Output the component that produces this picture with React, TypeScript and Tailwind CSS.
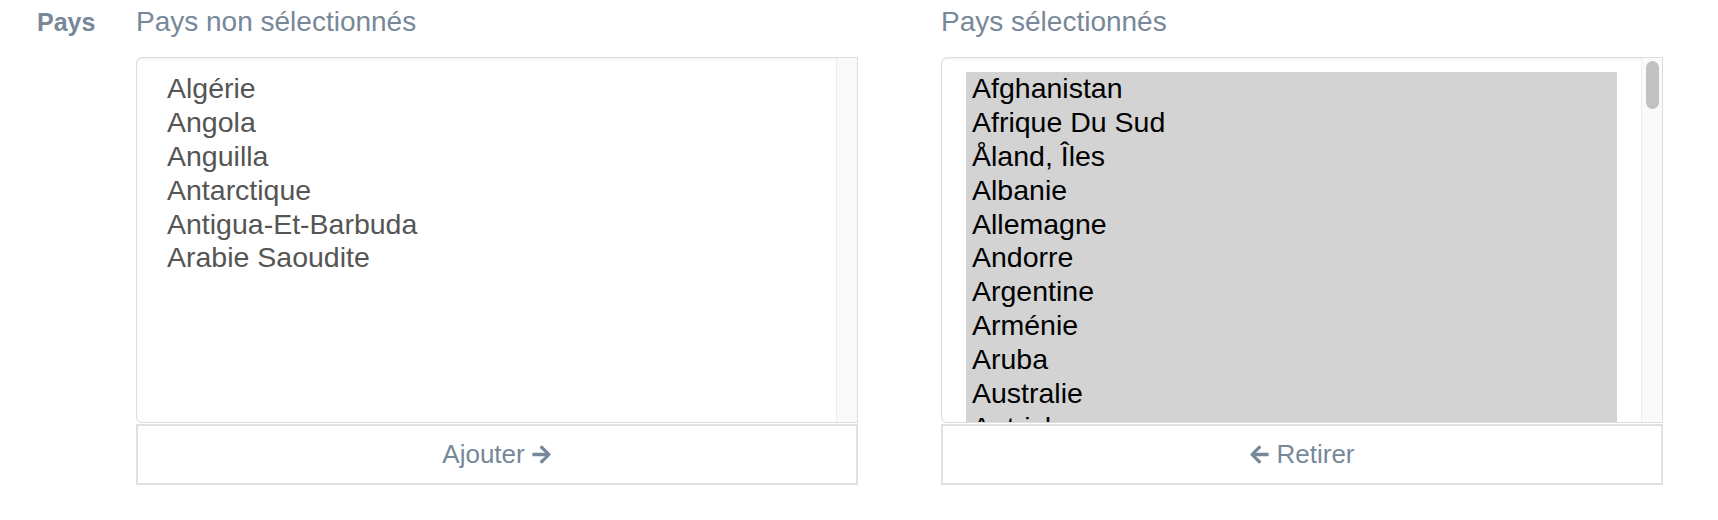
import { FaArrowLeft, FaArrowRight } from "react-icons/fa";

const UNSELECTED = [
  "Algérie",
  "Angola",
  "Anguilla",
  "Antarctique",
  "Antigua-Et-Barbuda",
  "Arabie Saoudite",
];

const SELECTED = [
  "Afghanistan",
  "Afrique Du Sud",
  "Åland, Îles",
  "Albanie",
  "Allemagne",
  "Andorre",
  "Argentine",
  "Arménie",
  "Aruba",
  "Australie",
  "Autriche",
  "Azerbaïdjan",
];

function Panel({
  title,
  items,
  selected,
  action,
}: {
  title: string;
  items: string[];
  selected: boolean;
  action: "add" | "remove";
}) {
  return (
    <div className="flex flex-col">
      <div className="mt-[5px] h-[34px] text-[28px] leading-[34px] text-[#778899]">
        {title}
      </div>

      {/* Multi-select list */}
      <div className="mt-[18px] h-[366px] flex border border-[#dddddd] rounded-l-[6px] overflow-hidden shadow-[inset_0_1px_2px_rgba(0,0,0,0.08)]">
        <div className="flex-1 overflow-hidden pt-[14px] px-[24px]">
          {items.map((item) => (
            <div
              key={item}
              className={`h-[33.9px] leading-[33.9px] pl-[6px] text-[28.5px] whitespace-nowrap ${
                selected ? "bg-[#d3d3d3] text-black" : "text-[#555555]"
              }`}
            >
              {item}
            </div>
          ))}
        </div>
        <div className="w-[21px] shrink-0 border-l border-[#ececec] bg-[#fafafa] pt-[3px] pl-[4px] pr-[3px]">
          {selected && <div className="h-[48px] rounded-full bg-[#c1c1c1]" />}
        </div>
      </div>

      <button className="mt-px h-[61px] border-2 border-[#e0e0e0] bg-white flex items-center justify-center gap-[6px] text-[26px] text-[#778899]">
        {action === "remove" && <FaArrowLeft size={21} />}
        <span>{action === "add" ? "Ajouter" : "Retirer"}</span>
        {action === "add" && <FaArrowRight size={21} />}
      </button>
    </div>
  );
}

export default function App() {
  return (
    <div className="flex w-[1718px] h-[520px] bg-white font-['Liberation_Sans',Arial,sans-serif]">
      <div className="w-[136px] shrink-0 pl-[37px] pt-[5px]">
        <span className="text-[25px] font-bold leading-[34px] text-[#778899]">
          Pays
        </span>
      </div>
      <div className="grid grid-cols-[722px_722px] gap-x-[83px]">
        <Panel
          title="Pays non sélectionnés"
          items={UNSELECTED}
          selected={false}
          action="add"
        />
        <Panel
          title="Pays sélectionnés"
          items={SELECTED}
          selected={true}
          action="remove"
        />
      </div>
    </div>
  );
}
